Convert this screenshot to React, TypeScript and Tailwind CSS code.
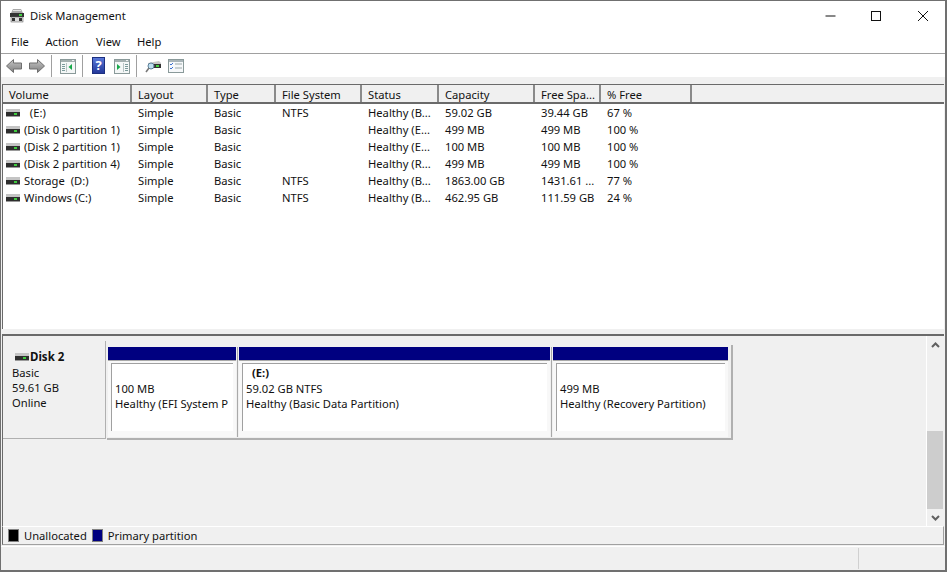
const font = "font-['Noto_Sans','Open_Sans',sans-serif]";

const columns = [
  { name: "Volume", w: "w-[129px]" },
  { name: "Layout", w: "w-[76px]" },
  { name: "Type", w: "w-[68px]" },
  { name: "File System", w: "w-[86px]" },
  { name: "Status", w: "w-[77px]" },
  { name: "Capacity", w: "w-[96px]" },
  { name: "Free Spa...", w: "w-[66px]" },
  { name: "% Free", w: "w-[91px]" },
];

const rows = [
  ["  (E:)", "Simple", "Basic", "NTFS", "Healthy (B...", "59.02 GB", "39.44 GB", "67 %"],
  ["(Disk 0 partition 1)", "Simple", "Basic", "", "Healthy (E...", "499 MB", "499 MB", "100 %"],
  ["(Disk 2 partition 1)", "Simple", "Basic", "", "Healthy (E...", "100 MB", "100 MB", "100 %"],
  ["(Disk 2 partition 4)", "Simple", "Basic", "", "Healthy (R...", "499 MB", "499 MB", "100 %"],
  ["Storage  (D:)", "Simple", "Basic", "NTFS", "Healthy (B...", "1863.00 GB", "1431.61 ...", "77 %"],
  ["Windows (C:)", "Simple", "Basic", "NTFS", "Healthy (B...", "462.95 GB", "111.59 GB", "24 %"],
];

function DriveIcon() {
  return (
    <svg width="14" height="8" viewBox="0 0 14 8" className="shrink-0">
      <rect x="0" y="0" width="14" height="3" fill="#c4c4c4" />
      <rect x="0" y="3" width="14" height="4" fill="#2e2e2e" />
      <rect x="8" y="4" width="3" height="2" fill="#3ecb3e" />
      <rect x="0" y="7" width="14" height="1" fill="#9a9a9a" />
    </svg>
  );
}

function Sep() {
  return <div className="w-px h-[22px] bg-[#a0a0a0] shrink-0" />;
}

// little window with a list on one side and a green arrow in the other pane
function PaneIcon({ kind }: { kind: "left" | "right" }) {
  const listX = kind === "left" ? 2 : 11;
  return (
    <svg width="16" height="15" viewBox="0 0 16 15" className="shrink-0 mt-[2px]">
      <rect x="0.5" y="0.5" width="15" height="14" fill="#f4f7f7" stroke="#8a9a9a" />
      <rect x="1" y="1" width="14" height="2" fill="#a4b0b0" />
      <rect x="12" y="1" width="2" height="1" fill="#eef2f2" />
      <rect x={listX} y="5" width="3" height="1" fill="#7a9a9a" />
      <rect x={listX} y="7" width="3" height="1" fill="#7a9a9a" />
      <rect x={listX} y="9" width="3" height="1" fill="#7a9a9a" />
      <rect x={listX} y="11" width="3" height="1" fill="#7a9a9a" />
      {kind === "left" ? (
        <>
          <rect x="6" y="4" width="1" height="9" fill="#b8c4c4" />
          <path d="M12 5v6L8.500 8z" fill="#17a94a" />
        </>
      ) : (
        <>
          <rect x="9" y="4" width="1" height="9" fill="#b8c4c4" />
          <path d="M3 5v6L6.500 8z" fill="#17a94a" />
        </>
      )}
    </svg>
  );
}

function Arrow({ flip }: { flip?: boolean }) {
  return (
    <svg width="16" height="14" viewBox="0 0 16 14" className={flip ? "-scale-x-100 shrink-0" : "shrink-0"}>
      <defs>
        <linearGradient id="arrowFill" x1="0" y1="0" x2="0" y2="1">
          <stop offset="0" stopColor="#c6c6c6" />
          <stop offset="1" stopColor="#7e7e7e" />
        </linearGradient>
      </defs>
      <path d="M.5 7 7.500.5V4h8v6h-8v3.500z" fill="url(#arrowFill)" stroke="#6f6f6f" />
    </svg>
  );
}

function Partition({ w, title, size, status }: { w: string; title?: string; size: string; status: string }) {
  return (
    <div className={`${w} h-[90px] flex flex-col shrink-0`}>
      <div className="h-[13px] bg-[#000080] shrink-0" />
      <div className="flex-1 min-h-0 pt-[2px] pl-[3px] pr-[3px] pb-[6px] border-t border-[#a9a9a9] flex flex-col bg-[#f8f8f8]">
        <div className="flex-1 min-h-0 bg-white border-t border-l border-[#a0a0a0] pl-[3px] flex flex-col overflow-hidden whitespace-nowrap">
          <div className="h-[15px] leading-[15px] mt-[1px] pl-[6px] font-bold">{title ?? ""}</div>
          <div className="h-[15px] leading-[15px] mt-[1px]">{size}</div>
          <div className="h-[16px] leading-[16px]">{status}</div>
        </div>
      </div>
    </div>
  );
}

export default function App() {
  return (
    <div className={`${font} w-[947px] h-[572px] overflow-hidden bg-[#f0f0f0] border border-[#707070] border-b-2 border-r-2 flex flex-col text-[11.2px] leading-[17px] text-[#111]`}>
      {/* title bar */}
      <div className="h-[30px] bg-white flex items-center shrink-0">
        <svg width="16" height="16" viewBox="0 0 16 16" className="ml-[8px]">
          <path d="M4 1h8l2 4H2z" fill="#a8a8a8" />
          <rect x="4" y="2" width="8" height="1" fill="#e4e4e4" />
          <rect x="1" y="5" width="14" height="4" fill="#333" />
          <rect x="10" y="6" width="3" height="2" fill="#43d043" />
          <rect x="2" y="9" width="12" height="5" fill="#dcdcdc" stroke="#555" strokeWidth="0.5" />
          <rect x="3" y="10" width="3" height="3" fill="#333" />
          <rect x="10" y="10" width="3" height="3" fill="#333" />
        </svg>
        <span className="ml-[5px] -mt-[2px]">Disk Management</span>
        <div className="ml-auto flex items-center">
          <svg width="46" height="30" viewBox="0 0 46 30">
            <path d="M17.500 15h10" stroke="#111" strokeWidth="1" />
          </svg>
          <svg width="46" height="30" viewBox="0 0 46 30">
            <rect x="17.500" y="10.500" width="9" height="9" fill="none" stroke="#111" />
          </svg>
          <svg width="46" height="30" viewBox="0 0 46 30" className="mr-[-1px]">
            <path d="M18 10l10 10M28 10L18 20" stroke="#111" strokeWidth="1" />
          </svg>
        </div>
      </div>

      {/* menu bar */}
      <div className="h-[20px] pb-[2px] bg-white border-b border-[#a0a0a0] flex items-center pl-[10px] gap-[16.5px] shrink-0 box-content">
        <span>File</span>
        <span>Action</span>
        <span className="ml-[1px]">View</span>
        <span>Help</span>
      </div>

      {/* toolbar */}
      <div className="h-[23px] bg-white flex items-center pl-[5px] shrink-0">
        <Arrow />
        <div className="w-[7px]" />
        <Arrow flip />
        <div className="w-[6px]" />
        <Sep />
        <div className="w-[8px]" />
        <PaneIcon kind="left" />
        <div className="w-[6px]" />
        <Sep />
        <div className="w-[9px]" />
        <div className="w-[13px] h-[17px] shrink-0 bg-gradient-to-b from-[#5a78d8] to-[#24389a] border border-[#1c2f80] text-white text-[13px] leading-[15px] font-bold text-center">?</div>
        <div className="w-[9px]" />
        <PaneIcon kind="right" />
        <div className="w-[6px]" />
        <Sep />
        <div className="w-[8px]" />
        <svg width="16" height="14" viewBox="0 0 16 14" className="shrink-0">
          <path d="M3 4l11-2 2 2v4H3z" fill="#c8c8c8" />
          <rect x="4" y="5" width="12" height="4" fill="#333" />
          <rect x="11" y="6" width="3" height="2" fill="#43d043" />
          <circle cx="6" cy="7" r="3" fill="#bfe0f0" stroke="#5b7f9a" />
          <path d="M4 9l-3 4" stroke="#777" strokeWidth="1.500" />
        </svg>
        <div className="w-[7px]" />
        <svg width="16" height="14" viewBox="0 0 16 14" className="shrink-0">
          <rect x="0.500" y="0.500" width="15" height="13" fill="#f6f8fa" stroke="#8a9a9a" />
          <rect x="1" y="1" width="14" height="2" fill="#a8b4b8" />
          <path d="M2 5l1 1 2-2M2 9l1 1 2-2" fill="none" stroke="#3a6fd0" />
          <path d="M7 5h7M7 9h7" stroke="#9aa8a8" />
        </svg>
      </div>

      <div className="h-[7px] shrink-0" />

      {/* volume list */}
      <div className="h-[245px] shrink-0 ml-[1px] mr-[1px] bg-white border-t border-l border-[#6a6a6a] flex flex-col">
        <div className="h-[17px] flex bg-[#f0f0f0] border-b-2 border-[#6a6a6a] shrink-0 box-content">
          {columns.map((c) => (
            <div key={c.name} className={`${c.w} shrink-0 h-[17px] pl-[6px] border-r-2 border-[#8a8a8a] leading-[19px] whitespace-nowrap overflow-hidden`}>
              {c.name}
            </div>
          ))}
        </div>
        <div>
          {rows.map((r) => (
            <div key={r[0]} className="h-[17px] flex whitespace-pre">
              {r.map((cell, i) => (
                <div key={i} className={`${columns[i].w} shrink-0 overflow-hidden ${i === 0 ? "pl-[3px] flex items-center gap-[4px]" : "pl-[6px]"}`}>
                  {i === 0 && <DriveIcon />}
                  {cell}
                </div>
              ))}
            </div>
          ))}
        </div>
      </div>

      {/* splitter */}
      <div className="h-[7px] shrink-0 mx-[1px] border-b-2 border-[#6a6a6a] bg-[#f0f0f0]" />

      {/* graphical view */}
      <div className="flex-1 min-h-0 ml-[1px] mr-[2px] border-l border-[#6a6a6a] flex bg-[#f0f0f0]">
        <div className="flex-1 pt-[5px] flex items-start">
          <div className="w-[103px] h-[98px] shrink-0 border-r border-b border-[#b0b0b0] pt-[7px] pl-[9px] leading-[15px]">
            <div className="flex items-center h-[17px] gap-[1px] pl-[3px] font-bold text-[11.5px]">
              <DriveIcon />
              Disk 2
            </div>
            <div>Basic</div>
            <div>59.61 GB</div>
            <div>Online</div>
          </div>
          <div className="flex mt-[4px] ml-[1px] pl-[1px] pt-[2px] pr-[3px] pb-[1px] border-r-2 border-b-2 border-[#b0b0b0] box-content h-[90px]">
            <Partition w="w-[128px]" size="100 MB" status="Healthy (EFI System P" />
            <div className="w-[1px] h-[90px] bg-[#a9a9a9] mx-[1px]" />
            <Partition w="w-[311px]" title="(E:)" size="59.02 GB NTFS" status="Healthy (Basic Data Partition)" />
            <div className="w-[1px] h-[90px] bg-[#a9a9a9] mx-[1px]" />
            <Partition w="w-[175px]" size="499 MB" status="Healthy (Recovery Partition)" />
          </div>
        </div>
        {/* scrollbar */}
        <div className="w-[17px] border-l border-white flex flex-col items-center shrink-0 pt-[6px]">
          <svg width="9" height="6" viewBox="0 0 9 6" className="shrink-0">
            <path d="M1 5l3.500-3.500L8 5" fill="none" stroke="#606060" strokeWidth="2" />
          </svg>
          <div className="h-[78px] w-full bg-[#cdcdcd] mt-[83px] shrink-0" />
          <svg width="9" height="6" viewBox="0 0 9 6" className="mt-[6px] shrink-0">
            <path d="M1 1l3.500 3.500L8 1" fill="none" stroke="#606060" strokeWidth="2" />
          </svg>
        </div>
      </div>

      {/* legend */}
      <div className="h-[17px] shrink-0 ml-[1px] mr-[1px] border-l border-l-[#6a6a6a] border-t border-t-white border-b border-b-[#a0a0a0] border-r border-r-[#a0a0a0] flex items-center pl-[5px] box-content">
        <div className="w-[11px] h-[13px] bg-black border border-[#808080]" />
        <span className="ml-[5px]">Unallocated</span>
        <div className="w-[11px] h-[13px] bg-[#000080] border border-[#808080] ml-[5px]" />
        <span className="ml-[5px]">Primary partition</span>
      </div>

      {/* status bar */}
      <div className="h-[24px] shrink-0 mt-[1px] border-t border-white flex justify-end">
        <div className="w-[87px] border-l border-[#d0d0d0] my-[1px]" />
      </div>
    </div>
  );
}
